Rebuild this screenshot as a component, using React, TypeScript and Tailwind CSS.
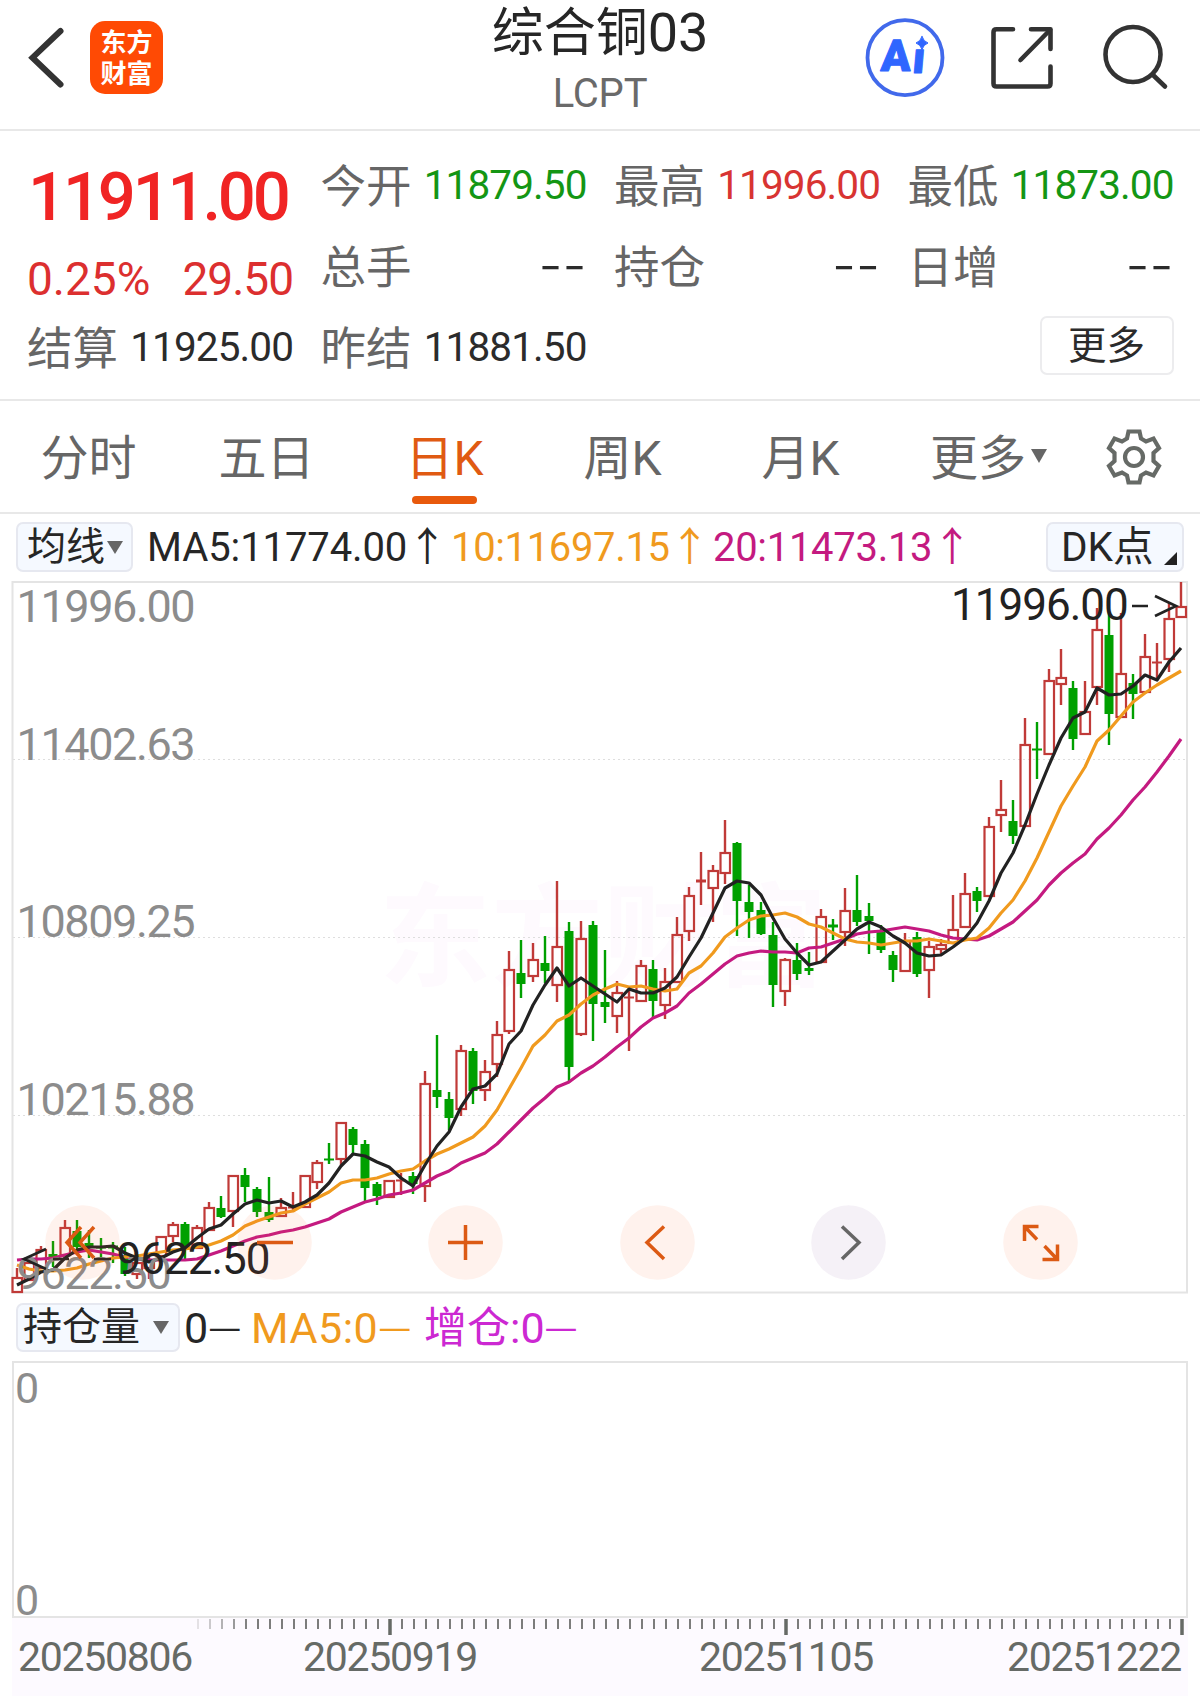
import React, { useState } from 'react'

// [direction, body top, body bottom, wick top, wick bottom]
type Candle = ['u' | 'd', number, number, number, number]

const CANDLES: Candle[] = [
  ['u', 1278, 1292, 1268, 1292], ['u', 1263, 1280, 1257, 1280], ['u', 1250, 1268, 1246, 1268], ['d', 1254, 1260, 1241, 1267],
  ['u', 1228, 1255, 1220, 1255], ['d', 1231, 1247, 1220, 1250], ['d', 1243, 1247, 1230, 1258], ['d', 1247, 1248, 1238, 1262],
  ['d', 1246, 1248, 1242, 1263], ['d', 1255, 1274, 1247, 1276], ['u', 1263, 1274, 1260, 1279], ['u', 1261, 1268, 1253, 1279],
  ['u', 1237, 1256, 1237, 1266], ['u', 1225, 1236, 1222, 1242], ['d', 1224, 1250, 1222, 1259], ['u', 1228, 1248, 1225, 1248],
  ['u', 1208, 1230, 1202, 1230], ['d', 1208, 1217, 1196, 1218], ['u', 1176, 1211, 1175, 1227], ['d', 1175, 1187, 1168, 1202],
  ['d', 1189, 1212, 1187, 1217], ['d', 1212, 1220, 1177, 1222], ['u', 1208, 1216, 1198, 1216], ['u', 1207, 1208, 1192, 1212],
  ['u', 1176, 1207, 1176, 1207], ['u', 1163, 1182, 1160, 1189], ['d', 1159, 1160, 1143, 1164], ['u', 1123, 1159, 1123, 1165],
  ['d', 1129, 1145, 1127, 1155], ['d', 1144, 1188, 1140, 1203], ['d', 1184, 1196, 1182, 1205], ['u', 1181, 1197, 1181, 1198],
  ['u', 1180, 1181, 1173, 1195], ['d', 1176, 1184, 1172, 1194], ['u', 1084, 1186, 1071, 1202], ['d', 1090, 1097, 1035, 1108],
  ['d', 1099, 1118, 1092, 1130], ['u', 1051, 1109, 1045, 1116], ['d', 1051, 1091, 1048, 1104], ['u', 1072, 1090, 1060, 1101],
  ['u', 1035, 1064, 1021, 1077], ['u', 970, 1031, 951, 1034], ['d', 973, 984, 940, 998], ['u', 960, 976, 943, 982],
  ['d', 963, 971, 936, 983], ['u', 947, 985, 881, 1002], ['d', 931, 1067, 922, 1082], ['u', 939, 1034, 921, 1036],
  ['d', 925, 1004, 921, 1041], ['d', 1002, 1007, 950, 1023], ['u', 993, 1016, 981, 1033], ['u', 997, 998, 989, 1051],
  ['u', 966, 1001, 960, 1002], ['d', 969, 1001, 960, 1017], ['u', 982, 1005, 968, 1019], ['u', 935, 982, 917, 982],
  ['u', 896, 931, 887, 941], ['u', 880, 882, 852, 905], ['u', 871, 888, 865, 922], ['u', 853, 873, 820, 884],
  ['d', 843, 901, 842, 936], ['d', 902, 912, 885, 938], ['d', 910, 934, 902, 935], ['d', 935, 985, 922, 1007],
  ['u', 960, 991, 958, 1006], ['d', 960, 974, 943, 980], ['d', 968, 971, 952, 975], ['u', 917, 962, 909, 962],
  ['d', 925, 927, 919, 940], ['u', 911, 932, 888, 946], ['d', 910, 922, 875, 926], ['d', 916, 921, 903, 954],
  ['d', 931, 950, 925, 953], ['d', 955, 970, 951, 982], ['u', 941, 971, 933, 971], ['d', 937, 974, 932, 977],
  ['u', 947, 970, 941, 998], ['u', 945, 949, 939, 954], ['u', 930, 943, 895, 943], ['u', 894, 927, 873, 927],
  ['d', 891, 901, 887, 912], ['u', 827, 896, 817, 896], ['u', 810, 815, 780, 832], ['d', 821, 836, 800, 844],
  ['u', 745, 826, 718, 826], ['d', 749, 750, 722, 779], ['u', 681, 754, 669, 754], ['u', 678, 684, 649, 705],
  ['d', 688, 739, 681, 750], ['u', 712, 734, 681, 734], ['u', 630, 687, 608, 705], ['d', 635, 714, 612, 745],
  ['u', 674, 717, 613, 717], ['d', 683, 694, 674, 719], ['u', 657, 692, 634, 692], ['u', 662, 663, 643, 678],
  ['u', 619, 659, 602, 672], ['u', 607, 617, 582, 618],
]

const MA5 = [
  1285, 1279, 1272, 1270, 1258, 1250, 1247, 1247, 1246, 1253, 1258, 1262, 1258, 1252, 1248, 1238, 1229, 1225, 1214, 1204,
  1200, 1203, 1201, 1207, 1202, 1195, 1183, 1166, 1154, 1156, 1162, 1167, 1178, 1186, 1165, 1146, 1132, 1107, 1089, 1086,
  1074, 1044, 1031, 1005, 985, 968, 986, 978, 986, 994, 1002, 989, 993, 993, 988, 977, 957, 938, 913, 888,
  881, 883, 895, 918, 939, 953, 965, 962, 951, 940, 929, 922, 927, 936, 943, 953, 956, 955, 947, 938,
  923, 901, 873, 853, 825, 794, 765, 738, 718, 712, 688, 695, 694, 686, 675, 680, 662, 648,
]

const MA10 = [
  1265, 1269, 1271, 1271, 1270, 1268, 1264, 1261, 1258, 1257, 1256, 1254, 1252, 1250, 1249, 1247, 1245, 1241, 1235, 1226,
  1221, 1217, 1213, 1211, 1204, 1198, 1192, 1183, 1180, 1180, 1178, 1174, 1171, 1169, 1161, 1154, 1149, 1143, 1137, 1126,
  1110, 1089, 1068, 1046, 1035, 1021, 1015, 1004, 995, 989, 984, 987, 986, 989, 991, 989, 973, 966, 953, 937,
  928, 920, 916, 915, 913, 917, 924, 927, 933, 939, 942, 943, 945, 943, 941, 941, 939, 941, 943, 940,
  938, 928, 913, 900, 881, 858, 832, 806, 786, 767, 741, 730, 716, 702, 693, 685, 678, 671,
]

const MA20 = [
  1260, 1259, 1259, 1258, 1255, 1252, 1250, 1252, 1254, 1257, 1259, 1260, 1260, 1260, 1260, 1259, 1255, 1251, 1246, 1241,
  1237, 1235, 1232, 1230, 1227, 1223, 1219, 1212, 1207, 1202, 1199, 1195, 1193, 1190, 1183, 1176, 1171, 1163, 1158, 1153,
  1144, 1132, 1120, 1108, 1098, 1087, 1082, 1073, 1066, 1057, 1047, 1038, 1027, 1018, 1013, 1006, 993, 984, 974, 964,
  956, 953, 951, 952, 952, 953, 948, 947, 943, 939, 934, 932, 931, 929, 927, 929, 931, 935, 938, 939,
  940, 936, 929, 922, 911, 900, 885, 873, 863, 854, 839, 828, 815, 800, 787, 772, 756, 739,
]

const UP = '#c03a38'
const DOWN = '#00a000'

const candleX = (i: number) => 17 + i * 12
const toPoints = (ys: number[]) => ys.map((y, i) => `${candleX(i)},${y}`).join(' ')

const PRICE_LABELS = [
  { text: '11996.00', y: 622 },
  { text: '11402.63', y: 760 },
  { text: '10809.25', y: 937 },
  { text: '10215.88', y: 1115 },
  { text: '9622.50', y: 1289 },
]

const TABS = ['分时', '五日', '日K', '周K', '月K']

function Header() {
  return (
    <header className="flex h-[131px] items-start justify-between border-b-2 border-[#e8e8e8]">
      <div className="flex w-[400px] items-start pl-[27px] pt-[21px]">
        <svg width="40" height="74" viewBox="27 21 40 74" fill="none" stroke="#333" strokeWidth="6">
          <path d="M60.500 31 L32.500 57.700 L60.500 84.500" strokeLinecap="round" />
        </svg>
        <div className="ml-[23px] flex h-[73px] w-[73px] flex-col items-center rounded-[15px] bg-[#ff4a04] pt-[4px] font-['Noto_Sans_CJK_SC',sans-serif] text-[26px] font-bold leading-[31px] text-white">
          <span>东方</span>
          <span>财富</span>
        </div>
      </div>
      <div className="flex flex-col items-center">
        <h1 className="h-[64px] text-[52px] leading-[66px] text-[#262626]">
          综合铜<span className="text-[54px]">03</span>
        </h1>
        <span className="text-[40px] leading-[60px] tracking-[-0.2px] text-[#6a6a6a]">LCPT</span>
      </div>
      <div className="w-[400px]">
        <svg width="400" height="128" viewBox="800 0 400 128" fill="none" strokeLinecap="round">
          <circle cx="905" cy="57.700" r="37.500" stroke="#4169eb" strokeWidth="3.800" />
          <g fill="#2f66ff" stroke="#2f66ff" strokeWidth="1" strokeLinejoin="round">
            <text x="881" y="71.500" fontSize="44" fontWeight="900" transform="skewX(-3) translate(3 0)">A</text>
            <text x="912" y="73" fontSize="44" fontWeight="900" transform="skewX(-5) translate(6 0)">ı</text>
            <path d="M922 36.500 Q923.500 41.500 928 43 Q923.500 44.500 922 49.500 Q920.500 44.500 916 43 Q920.500 41.500 922 36.500Z" />
          </g>
          <g stroke="#333" strokeWidth="4.600" strokeLinejoin="round">
            <path d="M1013 29.300 H996.500 Q993.500 29.300 993.500 32.300 V83.500 Q993.500 86.500 996.500 86.500 H1047.500 Q1050.500 86.500 1050.500 83.500 V66.500" />
            <path d="M1031 29.300 H1050.500 V49" />
            <path d="M1050 30 L1020.500 60" />
            <circle cx="1133" cy="54.500" r="27.500" />
            <path d="M1152.500 74.500 L1165 86.500" />
          </g>
        </svg>
      </div>
    </header>
  )
}

function Quote({ label, value, color }: { label: string; value?: string; color?: string }) {
  return (
    <div className="flex h-[81px] items-center justify-between whitespace-nowrap">
      <span className="pt-[4px] text-[45.5px] leading-[77px] text-[#666]">{label}</span>
      {value ? (
        <span className={`text-[40.5px] tracking-[-0.9px] ${color ?? 'text-[#2b2b2b]'}`}>{value}</span>
      ) : (
        <span className="pb-[3px] font-['Inter',sans-serif] text-[53px] font-light leading-[77px] text-[#2b2b2b]">--</span>
      )}
    </div>
  )
}

function QuotePanel() {
  return (
    <section className="grid h-[270px] grid-cols-[266px_266px_266px_266px] grid-rows-[81px_81px_81px] gap-x-[27.500px] border-b-2 border-[#e8e8e8] pl-[27px] pt-[14px]">
      <div className="row-span-2 flex flex-col whitespace-nowrap">
        <div className="h-[102px] pl-px text-[67px] font-medium leading-[104px] tracking-[-3.2px] text-[#f02424]">
          11911.00
        </div>
        <div className="flex h-[60px] justify-between text-[46px] leading-[65px] text-[#dc2f2f]">
          <span>0.25%</span>
          <span className="tracking-[-1px]">29.50</span>
        </div>
      </div>
      <Quote label="今开" value="11879.50" color="text-[#149614]" />
      <Quote label="最高" value="11996.00" color="text-[#d83432]" />
      <Quote label="最低" value="11873.00" color="text-[#149614]" />
      <Quote label="总手" />
      <Quote label="持仓" />
      <Quote label="日增" />
      <Quote label="结算" value="11925.00" />
      <Quote label="昨结" value="11881.50" />
      <div className="col-start-4 flex items-center justify-end pb-[4px]">
        <button className="h-[59px] w-[134px] rounded-[7px] border-2 border-[#ececee] text-[38.5px] leading-[54px] text-[#2b2b2b]">
          更多
        </button>
      </div>
    </section>
  )
}

function GearIcon() {
  return (
    <svg width="58" height="58" viewBox="-29 -29 58 58" fill="none" stroke="#666a66" strokeWidth="4.200">
      <path d="M-5.500 -25.500 H5.500 L7 -18.500 L12 -15.500 L19.500 -18.500 L25 -9 L19.500 -4 V4 L25 9 L19.500 18.500 L12 15.500 L7 18.500 L5.500 25.500 H-5.500 L-7 18.500 L-12 15.500 L-19.500 18.500 L-25 9 L-19.500 4 V-4 L-25 -9 L-19.500 -18.500 L-12 -15.500 L-7 -18.500 Z" />
      <circle r="9" />
    </svg>
  )
}

function PeriodTabs() {
  const [active, setActive] = useState('日K')

  return (
    <nav className="flex h-[113px] border-b-2 border-[#e8e8e8]">
      {TABS.map((tab) => (
        <button
          key={tab}
          onClick={() => setActive(tab)}
          className={`flex w-[178px] flex-col items-center text-[48px] leading-[95px] ${
            active === tab ? 'text-[#e05a12]' : 'text-[#666]'
          }`}
        >
          <span className="h-[95px] pt-[10px] pr-px">{tab}</span>
          {active === tab && <span className="mr-[2px] h-[8px] w-[65px] rounded-full bg-[#e8590c]" />}
        </button>
      ))}
      <button className="ml-[40px] flex items-center gap-[5px] pb-[2px] text-[48px] leading-[95px] text-[#666]">
        <span className="pt-[6px]">更多</span>
        <svg width="16" height="14" viewBox="0 0 16 14" fill="#666">
          <path d="M0 0 H16 L8 14Z" />
        </svg>
      </button>
      <div className="ml-[58px] flex items-center">
        <GearIcon />
      </div>
    </nav>
  )
}

function MaBar() {
  return (
    <div className="flex h-[67px] items-center whitespace-nowrap pl-[16px] pr-[16px] text-[40px]">
      <div className="mb-px flex h-[50px] w-[117px] items-center justify-between rounded-[7px] border-2 border-[#e6e8f0] bg-[#f5f9ff] pl-[9px] pr-[8px]">
        <span className="text-[39px] leading-[46px] text-[#262626]">均线</span>
        <svg width="16" height="13" viewBox="0 0 16 13" fill="#666">
          <path d="M0 0 H16 L8 13Z" />
        </svg>
      </div>
      <span className="ml-[14px] w-[304px] tracking-[-0.1px] text-[#262626]">MA5:11774.00↑</span>
      <span className="w-[262px] tracking-[-0.35px] text-[#f09a1e]">10:11697.15↑</span>
      <span className="tracking-[-0.3px] text-[#c41a80]">20:11473.13↑</span>
      <div className="mb-px ml-auto flex h-[50px] w-[138px] items-end justify-between rounded-[7px] border-2 border-[#e6e8f0] bg-[#f5f9ff] pb-[5px] pl-[13px] pr-[5px]">
        <span className="text-[40.5px] leading-[36px] text-[#262626]">DK点</span>
        <svg width="13" height="13" viewBox="0 0 13 13" fill="#222">
          <path d="M13 0 V13 H0Z" />
        </svg>
      </div>
    </div>
  )
}

function CandleShape({ candle, x }: { candle: Candle; x: number }) {
  const [dir, top, bottom, high, low] = candle
  const color = dir === 'u' ? UP : DOWN

  if (bottom - top <= 2) {
    return (
      <g stroke={color} strokeWidth="2.400">
        <path d={`M${x} ${high}V${low}`} />
        <path d={`M${x - 5} ${(top + bottom) / 2}H${x + 5}`} strokeWidth={bottom - top + 1} />
      </g>
    )
  }

  return (
    <g stroke={color} strokeWidth="2.400">
      <path d={`M${x} ${high}V${top}M${x} ${bottom}V${low}`} />
      {dir === 'u' ? (
        <rect x={x - 4.5} y={top} width="9.500" height={bottom - top} fill="none" strokeWidth="2.200" />
      ) : (
        <rect x={x - 4.5} y={top} width="9" height={bottom - top} fill={color} stroke="none" />
      )}
    </g>
  )
}

function ChartControls() {
  return (
    <g fill="none" stroke="#dc5a14" strokeWidth="3.500">
      {[82.5, 274.5, 465.5, 657.5, 1040.5].map((cx) => (
        <circle key={cx} cx={cx} cy="1242.500" r="37.300" fill="#ff6432" fillOpacity="0.085" stroke="none" />
      ))}
      <circle cx="848.500" cy="1242.500" r="37.300" fill="#6e3c8c" fillOpacity="0.07" stroke="none" />
      <path d="M81 1227 L67 1242.500 L81 1258 M94 1227 L80 1242.500 L94 1258" />
      <path d="M257 1242.500 H293" />
      <path d="M448 1242.500 H483 M465.500 1225 V1260" />
      <path d="M664 1226.500 L647 1242.500 L664 1259" />
      <path d="M842 1226.500 L859 1242.500 L842 1259" stroke="#666" />
      <path d="M1038.500 1226.500 H1024.500 V1241 M1025 1227 L1037 1239.500" />
      <path d="M1042.500 1259.500 H1057.500 V1244.500 M1057 1259 L1044.500 1246" />
    </g>
  )
}

function KlineChart() {
  return (
    <svg className="block" width="1200" height="713" viewBox="0 581 1200 713">
      <text x="379" y="978" fontSize="112" fontWeight="700" fill="#fefafe">东方财富</text>
      <g stroke="#dedede" strokeWidth="1" strokeDasharray="2 3">
        <path d="M13 759.500H1187M13 937.500H1187M13 1115.500H1187" />
      </g>
      <rect x="12.500" y="582" width="1174.500" height="710.500" fill="none" stroke="#e4e4e4" strokeWidth="2" />
      {CANDLES.map((candle, i) => (
        <CandleShape key={i} candle={candle} x={candleX(i)} />
      ))}
      <g fill="none" strokeWidth="3.200" strokeLinejoin="round">
        <polyline points={toPoints(MA20)} stroke="#c41a80" />
        <polyline points={toPoints(MA10)} stroke="#f09a1e" />
        <polyline points={toPoints(MA5)} stroke="#222" />
      </g>
      <g fontSize="45" letterSpacing="-1.4" fill="#8c8c8c">
        {PRICE_LABELS.map((label) => (
          <text key={label.text} x="16.500" y={label.y}>{label.text}</text>
        ))}
      </g>
      {/* highest and lowest price markers */}
      <g fontSize="44" letterSpacing="-1" fill="#222">
        <text x="951" y="620">11996.00</text>
        <text x="116.500" y="1273.500">9622.50</text>
      </g>
      <g fill="none" stroke="#222" strokeWidth="2.700">
        <path d="M1132 606H1148M1155 596L1176 606L1155 616" />
        <path d="M46 1249L24 1259L46 1269M53 1259H69M94 1259H111" />
      </g>
      <ChartControls />
    </svg>
  )
}

function Dash() {
  return (
    <span className="align-[3px] font-['Noto_Sans_CJK_SC',sans-serif] text-[37px] leading-none tracking-normal">—</span>
  )
}

function PositionBar() {
  return (
    <div className="flex h-[67px] items-center whitespace-nowrap pl-[16px] text-[43px] leading-[60px]">
      <div className="flex h-[49px] w-[164px] items-center justify-between rounded-[7px] border-2 border-[#e6e8f0] bg-[#f5f9ff] pl-[5px] pr-[9px]">
        <span className="text-[39px] leading-[45px] text-[#262626]">持仓量</span>
        <svg width="16" height="13" viewBox="0 0 16 13" fill="#666">
          <path d="M0 0 H16 L8 13Z" />
        </svg>
      </div>
      <span className="ml-[4px] h-[60px] w-[67px] text-[#262626]">
        0<Dash />
      </span>
      <span className="h-[60px] w-[173px] tracking-[0.5px] text-[#f09a1e]">
        MA5:0<Dash />
      </span>
      <span className="h-[60px] text-[#cc28d2]">
        增仓:0<Dash />
      </span>
    </div>
  )
}

function PositionChart() {
  return (
    <div className="ml-[12px] flex h-[257px] w-[1176px] flex-col justify-between border-2 border-[#e4e4e4] pl-px text-[43px] leading-[44px] text-[#8c8c8c]">
      <span className="pt-[3px]">0</span>
      <span className="h-[38px]">0</span>
    </div>
  )
}

function DateAxis() {
  const ticks = Array.from({ length: 83 }, (_, i) => i + 15)

  return (
    <div className="ml-[12px] w-[1176px] bg-[#fdfaff]">
      <svg className="block" width="1176" height="18" viewBox="12 1618 1176 18">
        {ticks.map((i) => {
          const major = i === 31 || i === 64 || i === 97
          return (
            <path
              key={i}
              d={`M${18 + i * 12} 1619V${major ? 1635 : 1629}`}
              stroke={major ? '#666a66' : '#7c7c7c'}
              strokeWidth={major ? 3.5 : 2}
              opacity={Math.min(1, (i - 14) * 0.19)}
            />
          )
        })}
      </svg>
      <div className="flex h-[60px] text-[41px] leading-[42px] tracking-[-1.3px] text-[#666a66]">
        <span className="w-[285px] pl-[6px]">20250806</span>
        <span className="w-[396px] pl-[6px]">20250919</span>
        <span className="w-[308px] pl-[6px]">20251105</span>
        <span className="pl-[6px]">20251222</span>
      </div>
    </div>
  )
}

export default function App() {
  return (
    <div className="h-[1696px] w-[1200px] overflow-hidden bg-white font-['Roboto','Noto_Sans_CJK_SC',sans-serif]">
      <Header />
      <QuotePanel />
      <PeriodTabs />
      <MaBar />
      <KlineChart />
      <PositionBar />
      <PositionChart />
      <DateAxis />
    </div>
  )
}
